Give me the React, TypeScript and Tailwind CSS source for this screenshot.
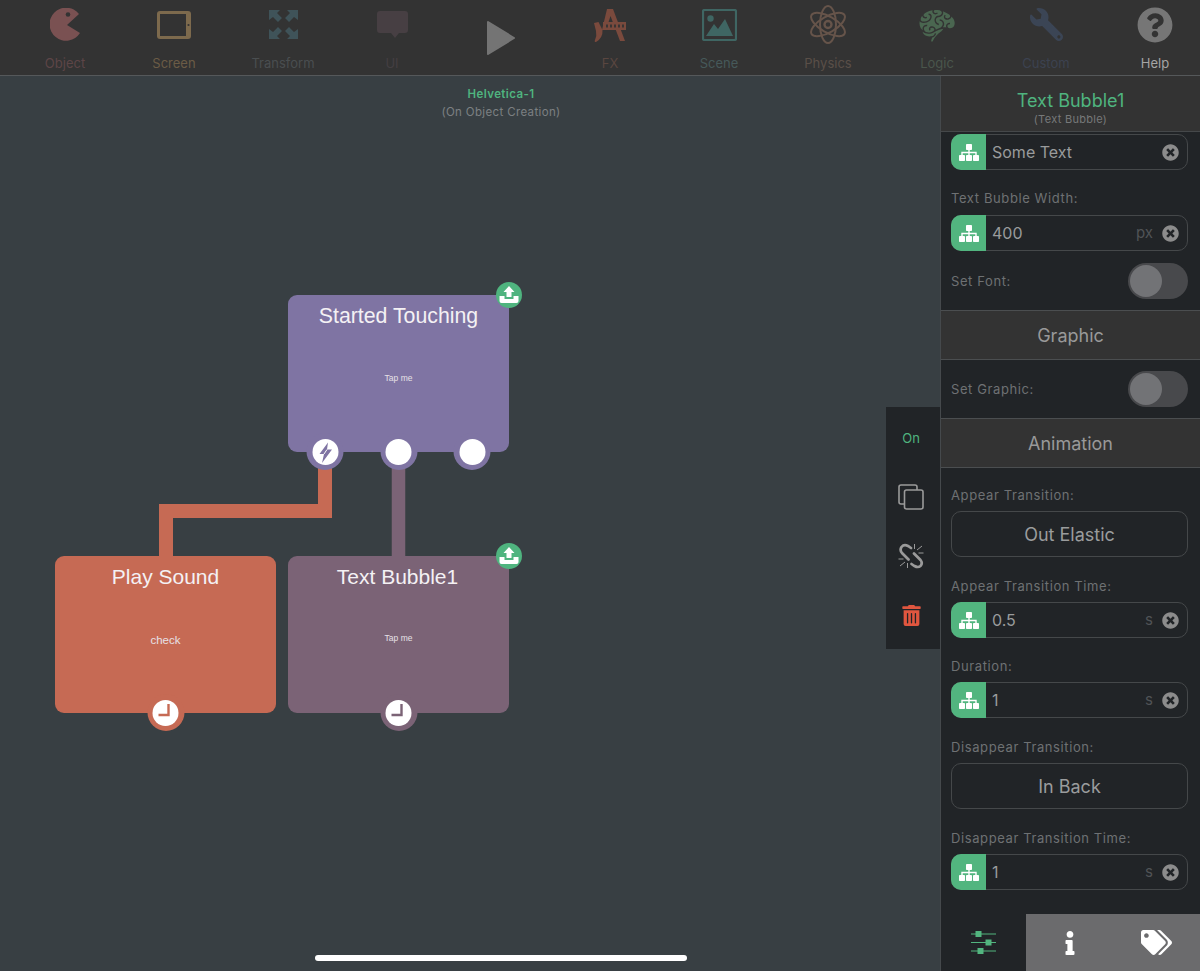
import { FaInfo, FaQuestionCircle, FaTags, FaTimesCircle, FaTrashAlt, FaWrench } from 'react-icons/fa';
import { GiBrain } from 'react-icons/gi';
import type { ReactNode } from 'react';

const SANS = 'font-["Inter","Liberation_Sans",sans-serif]';
const HELV = 'font-["Liberation_Sans",sans-serif]';

function Pacman() {
  return (
    <svg viewBox="0 0 31 33" className="h-[33px] w-[31px]">
      <path d="M29 6 A16.500 16.500 0 1 0 30 25 L17 17 Z" fill="#7a5152" />
      <circle cx="18" cy="6.500" r="2.300" fill="#333333" />
    </svg>
  );
}

function Tablet() {
  return (
    <svg viewBox="0 0 34 28" className="h-[28px] w-[34px]">
      <rect width="34" height="28" rx="3" fill="#7d6a4d" />
      <rect x="3" y="3" width="26" height="22" fill="#333333" />
      <circle cx="31.500" cy="14" r="1.100" fill="#333333" />
    </svg>
  );
}

function Arrows() {
  return (
    <svg viewBox="0 0 29 29" className="size-[29px]" fill="#3f5359">
      <path d="M0 0h11l-3 3 5 5-4 4-5-5-4 3z" />
      <path d="M29 0H18l3 3-5 5 4 4 5-5 4 3z" />
      <path d="M0 29H11l-3-3 5-5-4-4-5 5-4-3z" />
      <path d="M29 29H18l3-3-5-5 4-4 5 5 4-3z" />
    </svg>
  );
}

function Bubble() {
  return (
    <svg viewBox="0 0 31 27" className="h-[27px] w-[31px]" fill="#473f43">
      <path d="M3 0h25a3 3 0 0 1 3 3v16a3 3 0 0 1-3 3h-6l-4 5-4-5H3a3 3 0 0 1-3-3V3a3 3 0 0 1 3-3z" />
    </svg>
  );
}

function Artsy() {
  return (
    <svg viewBox="0 0 34 34" className="size-[34px]">
      <path d="M14 1 h6 L32 33 h-5 L17.500 8 L13 22 h-4 z" fill="#7a4a3d" />
      <rect x="10" y="14" width="23" height="8" fill="#7a4a3d" />
      <path d="M14 16.500v3M18 16.500v3M22 16.500v3M26 16.500v3M30 16.500v3" stroke="#333333" strokeWidth="1.800" />
      <path d="M1 15 L5.500 14 L9.500 22 Q10 30 3 34 Q1 34 2 32 Q4 28 3 23z" fill="#7a4a3d" />
    </svg>
  );
}

function Picture() {
  return (
    <svg viewBox="0 0 35 32" className="h-[32px] w-[35px]">
      <rect x="1" y="1" width="33" height="30" rx="1.500" fill="none" stroke="#3f6663" strokeWidth="2.200" />
      <circle cx="8.500" cy="9.500" r="3.200" fill="#3f6663" />
      <path d="M4 27 L12 15 L16 20 L23 10 L31 27 Z" fill="#3f6663" />
    </svg>
  );
}

function Atom() {
  return (
    <svg viewBox="0 0 36 39" className="h-[39px] w-[36px]" fill="none" stroke="#66544a" strokeWidth="2">
      <ellipse cx="18" cy="19.500" rx="8" ry="19" transform="rotate(60 18 19.500)" />
      <ellipse cx="18" cy="19.500" rx="8" ry="19" transform="rotate(-60 18 19.500)" />
      <ellipse cx="18" cy="19.500" rx="8" ry="18.500" />
      <circle cx="18" cy="19.500" r="3.500" strokeWidth="2.400" />
    </svg>
  );
}

const tools: { label: string; color: string; icon: ReactNode }[] = [
  { label: 'Object', color: 'text-[#5d4547]', icon: <Pacman /> },
  { label: 'Screen', color: 'text-[#6b5c46]', icon: <Tablet /> },
  { label: 'Transform', color: 'text-[#4a4e50]', icon: <Arrows /> },
  { label: 'UI', color: 'text-[#443f42]', icon: <Bubble /> },
  { label: '', color: '', icon: null },
  { label: 'FX', color: 'text-[#5a4640]', icon: <Artsy /> },
  { label: 'Scene', color: 'text-[#46595a]', icon: <Picture /> },
  { label: 'Physics', color: 'text-[#5a4f48]', icon: <Atom /> },
  { label: 'Logic', color: 'text-[#4a564c]', icon: <GiBrain className="size-[38px] text-[#4a6650]" /> },
  { label: 'Custom', color: 'text-[#3c4250]', icon: <FaWrench className="size-[33px] -scale-x-100 text-[#3b4555]" /> },
  { label: 'Help', color: 'text-[#a5a5a5]', icon: <FaQuestionCircle className="size-[36px] text-[#767676]" /> },
];

function TopBar() {
  return (
    <div className="grid h-[76px] shrink-0 grid-cols-[repeat(11,109px)] overflow-hidden border-b border-[#55585a] bg-[#333333] pl-[10.5px]">
      {tools.map((t) =>
        t.label ? (
          <div key={t.label} className="flex flex-col items-center">
            <div className="flex h-[48px] items-center justify-center pt-[1px]">{t.icon}</div>
            <span className={`${SANS} mt-[7px] text-[13px] leading-[16px] ${t.color}`}>{t.label}</span>
          </div>
        ) : (
          <div key="play" className="flex items-center justify-center pt-[1px]">
            <svg viewBox="0 0 30 36" className="h-[36px] w-[30px]">
              <path d="M2 2 L28 18 L2 34 Z" fill="#747474" stroke="#747474" strokeWidth="2" strokeLinejoin="round" />
            </svg>
          </div>
        ),
      )}
    </div>
  );
}

function UploadBadge() {
  return (
    <svg viewBox="0 0 26 26" className="absolute right-[-13px] top-[-13px] size-[26px]">
      <circle cx="13" cy="13" r="13" fill="#4fb47f" />
      <path d="M13 4 L18.500 10 H15.500 V15 H10.500 V10 H7.500 Z" fill="#ffffff" />
      <path d="M3.500 14 H8.500 V17 H17.500 V14 H22.500 V19 Q22.500 21 20.500 21 H5.500 Q3.500 21 3.500 19 Z" fill="#ffffff" />
    </svg>
  );
}

function Port({ color, className, children }: { color: string; className: string; children?: ReactNode }) {
  return (
    <div className={`absolute bottom-[-18px] flex size-[37px] -translate-x-1/2 items-center justify-center rounded-full ${color} ${className}`}>
      <div className="flex size-[26px] items-center justify-center rounded-full bg-white">{children}</div>
    </div>
  );
}

function ClockHands({ color }: { color: string }) {
  return (
    <svg viewBox="0 0 26 26" className="size-[26px]">
      <path d="M16 4 V15 H6" fill="none" stroke={color} strokeWidth="2.400" />
    </svg>
  );
}

function Node({ title, sub, subClass, titleClass, color, pos, children }: {
  title: string;
  sub: string;
  subClass: string;
  titleClass: string;
  color: string;
  pos: string;
  children?: ReactNode;
}) {
  return (
    <div className={`absolute flex h-[157px] w-[221px] flex-col items-center rounded-[9px] ${color} ${pos} ${HELV}`}>
      <div className={`text-[#f4f1f4] ${titleClass}`}>{title}</div>
      <div className={`absolute left-0 right-0 text-center text-[#e6e1e6] ${subClass}`}>{sub}</div>
      {children}
    </div>
  );
}

function Canvas() {
  return (
    <div className="relative flex-1 bg-[#383f43]">
      <div className={`${SANS} pl-[62px] pt-[10px] text-center`}>
        <div className="text-[11.500px] font-semibold leading-[16px] tracking-[0.4px] text-[#4fb47f]">Helvetica-1</div>
        <div className="mt-[2px] text-[11.500px] leading-[16px] tracking-[0.35px] text-[#7c8082]">(On Object Creation)</div>
      </div>

      {/* wires */}
      <svg className="absolute left-0 top-0" width="886" height="700" fill="none">
        <path d="M325 380 V435 H166 V485" stroke="#c66a54" strokeWidth="14" />
        <path d="M398.500 380 V485" stroke="#7b6376" strokeWidth="13.500" />
      </svg>

      <Node title="Started Touching" sub="Tap me" subClass="top-[77px] text-[8.500px] leading-[12px]" titleClass="mt-[8px] text-[21.300px] leading-[26px]" color="bg-[#7f74a3]" pos="left-[288px] top-[219px]">
        <UploadBadge />
        <Port color="bg-[#7f74a3]" className="left-[37px]">
          <svg viewBox="0 0 26 26" className="size-[26px]">
            <path d="M15.500 3.500 L7 15 H11.500 L9.500 24 L19.500 10.500 H14.500 Z" fill="#7f74a3" />
            <path d="M11.500 15 L14.500 10.500" stroke="#ffffff" strokeWidth="1" />
          </svg>
        </Port>
        <Port color="bg-[#7f74a3]" className="left-[110.500px]" />
        <Port color="bg-[#7f74a3]" className="left-[184px]" />
      </Node>

      <Node title="Play Sound" sub="check" subClass="top-[77px] text-[11.500px] leading-[14px]" titleClass="mt-[7px] text-[21px] leading-[27px]" color="bg-[#c66a54]" pos="left-[55px] top-[480px]">
        <Port color="bg-[#c66a54]" className="left-[110.500px]">
          <ClockHands color="#c66a54" />
        </Port>
      </Node>

      <Node title="Text Bubble1" sub="Tap me" subClass="top-[76px] text-[8.500px] leading-[12px]" titleClass="mt-[7px] -translate-x-px text-[21px] leading-[27px]" color="bg-[#7b6376]" pos="left-[288px] top-[480px]">
        <UploadBadge />
        <Port color="bg-[#7b6376]" className="left-[110.500px]">
          <ClockHands color="#7b6376" />
        </Port>
      </Node>

      {/* tool strip */}
      <div className="absolute right-0 top-[331px] flex h-[242px] w-[54px] flex-col items-center bg-[#212427] pr-[4px]">
        <div className={`${SANS} mt-[23px] h-[16px] text-[13px] leading-[16px] text-[#4fb47f]`}>On</div>
        <svg viewBox="0 0 26 26" className="mt-[38px] size-[26px]" fill="none" stroke="#9a9a9a" strokeWidth="1.600">
          <path d="M6 20 H3 Q1 20 1 18 V3 Q1 1 3 1 H17 Q19 1 19 3 V6" />
          <rect x="6.500" y="6" width="18.500" height="19" rx="2" />
        </svg>
        <svg viewBox="0 0 26 26" className="mt-[33px] size-[26px]" fill="none" stroke="#9a9a9a">
          <path d="M13 5 L10 3 Q6 1 3.500 4 Q1.500 7 4 10 L10.500 16.500 M16 10.500 L22.500 17 Q25 20 22.500 23 Q20 25 16.500 23 L13.500 21" strokeWidth="2.700" strokeLinecap="round" />
          <path d="M16.500 1 V6 M19 7 L24 3 M20.500 10 H25.500 M9.500 25 V20 M7 19 L2 23 M5.500 16 H0.500" strokeWidth="1" />
        </svg>
        <FaTrashAlt className="mt-[36px] h-[21px] w-[19px] text-[#e0563f]" />
      </div>

      {/* home indicator */}
      <div className="absolute bottom-[10px] left-[315px] h-[6px] w-[372px] rounded-full bg-white" />
    </div>
  );
}

function Label({ children, className = 'mb-[8px] mt-[21px]' }: { children: ReactNode; className?: string }) {
  return <div className={`h-[16px] text-[13px] leading-[16px] tracking-[0.6px] text-[#6e7173] ${className}`}>{children}</div>;
}

function TreeIcon() {
  return (
    <svg viewBox="0 0 20 17" className="h-[17px] w-[20px]" fill="#ffffff">
      <rect x="7" y="0" width="6" height="6" rx="0.800" />
      <rect x="0" y="11" width="6" height="6" rx="0.800" />
      <rect x="7" y="11" width="6" height="6" rx="0.800" />
      <rect x="14" y="11" width="6" height="6" rx="0.800" />
      <path d="M10 5 V11 M3 11 V8.500 H17 V11" fill="none" stroke="#ffffff" strokeWidth="1.400" />
    </svg>
  );
}

function Field({ value, unit }: { value: string; unit?: string }) {
  return (
    <div className="flex h-[36px] items-center rounded-[10px] border border-[#45484a]">
      <div className="-my-px -ml-px flex h-[36px] w-[35px] shrink-0 items-center justify-center rounded-l-[10px] bg-[#52b57f]">
        <TreeIcon />
      </div>
      <span className="ml-[6px] flex-1 text-[16px] text-[#999b9c]">{value}</span>
      {unit && <span className="mr-[9px] text-[15px] text-[#505356]">{unit}</span>}
      <FaTimesCircle className="mr-[8px] size-[17px] text-[#8c8c8c]" />
    </div>
  );
}

function Toggle({ label, className }: { label: string; className: string }) {
  return (
    <div className={`flex items-center justify-between ${className}`}>
      <span className="pt-[2px] text-[13px] tracking-[0.6px] text-[#6e7173]">{label}</span>
      <div className="flex h-[36px] w-[60px] items-center rounded-full bg-[#48494c] pl-[2px]">
        <div className="size-[32px] rounded-full bg-[#727376]" />
      </div>
    </div>
  );
}

function Section({ title }: { title: string }) {
  return (
    <div className="-ml-[10px] -mr-[12px] flex h-[50px] items-center justify-center border-y border-[#4b4e50] bg-[#333333] text-[18px] text-[#999999]">
      {title}
    </div>
  );
}

function Choice({ value }: { value: string }) {
  return (
    <div className="flex h-[46px] items-center justify-center rounded-[10px] border border-[#45484a] text-[18px] text-[#9a9c9d]">
      {value}
    </div>
  );
}

function Panel() {
  return (
    <div className={`${SANS} flex w-[260px] shrink-0 flex-col border-l border-[#45494c] bg-[#212427]`}>
      <div className="flex h-[56px] shrink-0 flex-col items-center border-b border-[#45484a] bg-[#333333] pt-[14px]">
        <div className="text-[18px] leading-[22px] text-[#4fb47f]">Text Bubble1</div>
        <div className="text-[11px] leading-[14px] tracking-[0.3px] text-[#77797a]">(Text Bubble)</div>
      </div>
      <div className="flex-1 overflow-hidden pl-[10px] pr-[12px] pt-[2px]">
        <Field value="Some Text" />
        <Label className="mb-[9px] mt-[20px]">Text Bubble Width:</Label>
        <Field value="400" unit="px" />
        <Toggle label="Set Font:" className="mb-[11px] mt-[12px]" />
        <Section title="Graphic" />
        <Toggle label="Set Graphic:" className="my-[11px]" />
        <Section title="Animation" />
        <Label className="mb-[8px] mt-[19px]">Appear Transition:</Label>
        <Choice value="Out Elastic" />
        <Label>Appear Transition Time:</Label>
        <Field value="0.5" unit="s" />
        <Label className="mb-[8px] mt-[20px]">Duration:</Label>
        <Field value="1" unit="s" />
        <Label>Disappear Transition:</Label>
        <Choice value="In Back" />
        <Label>Disappear Transition Time:</Label>
        <Field value="1" unit="s" />
      </div>
      <div className="flex h-[57px] shrink-0">
        <div className="flex w-[85px] items-center justify-center">
          <svg viewBox="0 0 25 23" className="h-[23px] w-[25px]" fill="#52b57f">
            <path d="M0 3 H25 M0 11.500 H25 M0 20 H25" stroke="#52b57f" strokeWidth="1" />
            <rect x="4.500" y="0" width="6" height="6" />
            <rect x="14.500" y="8.500" width="6" height="6" />
            <rect x="6.500" y="17" width="6" height="6" />
          </svg>
        </div>
        <div className="flex flex-1 items-center justify-center bg-[#6b6b6d]">
          <FaInfo className="size-[24px] text-white" />
        </div>
        <div className="flex flex-1 items-center justify-center bg-[#6b6b6d]">
          <FaTags className="size-[31px] text-white" />
        </div>
      </div>
    </div>
  );
}

export default function App() {
  return (
    <div className="flex h-[971px] w-[1200px] flex-col overflow-hidden bg-[#383f43]">
      <TopBar />
      <div className="flex min-h-0 flex-1">
        <Canvas />
        <Panel />
      </div>
    </div>
  );
}
